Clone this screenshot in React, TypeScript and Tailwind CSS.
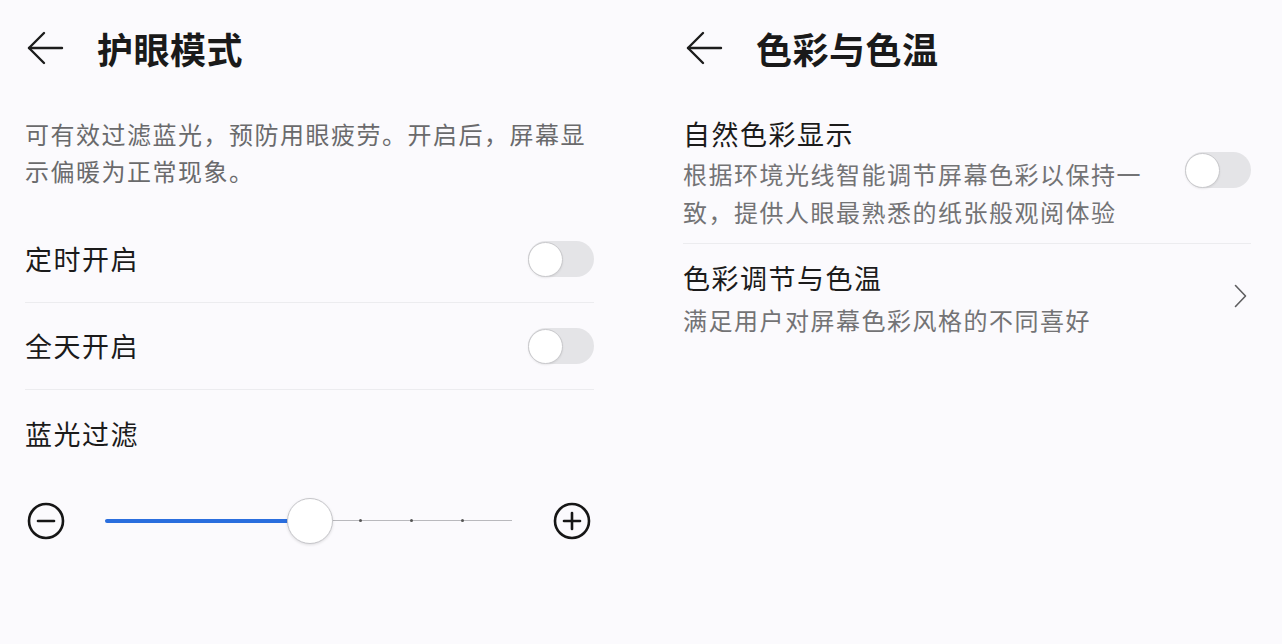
import React from "react";

const font = "font-['Noto_Sans_CJK_SC','Noto_Sans',sans-serif]";

function BackArrow({ className = "" }: { className?: string }) {
  return (
    <svg viewBox="0 0 37 34" className={`w-[37px] h-[34px] ${className}`} fill="none" stroke="#1c1c1c" strokeWidth="2.4" strokeLinecap="round" strokeLinejoin="round">
      <path d="M2 17 H35" />
      <path d="M17 2 L2 17 L17 32" />
    </svg>
  );
}

function Toggle() {
  return (
    <div className="w-[66px] h-[36px] rounded-full bg-[#e4e4e7] flex items-center">
      <div className="w-[35px] h-[35px] rounded-full bg-white border border-[#c9c9cc] shadow-[0_1px_2px_rgba(0,0,0,0.08)]" />
    </div>
  );
}

function Row({ label }: { label: string }) {
  return (
    <div className="h-[87px] flex items-center justify-between border-b border-[#ececef]">
      <span className="text-[27px] leading-[38px] tracking-[1.5px] text-[#1b1b1b]">{label}</span>
      <Toggle />
    </div>
  );
}

function RoundIcon({ plus }: { plus?: boolean }) {
  return (
    <svg viewBox="0 0 38 38" className="w-[38px] h-[38px]" fill="none" stroke="#161616" strokeWidth="2.6" strokeLinecap="round">
      <circle cx="19" cy="19" r="17" />
      <path d="M11 19 H27" />
      {plus && <path d="M19 11 V27" />}
    </svg>
  );
}

function BlueFilter() {
  return (
    <div className="flex items-center h-[46px]">
      <div className="ml-[2px]">
        <RoundIcon />
      </div>
      <div className="relative ml-[40px] w-[407px] h-[46px]">
        <div className="absolute left-0 right-0 top-[22px] h-px bg-[#b9b9bd]" />
        <div className="absolute left-0 w-[190px] top-[21px] h-[4px] bg-[#2a6ede] rounded-l-full" />
        <div className="absolute left-[254px] top-[21px] w-[3px] h-[3px] rounded-full bg-[#555]" />
        <div className="absolute left-[305px] top-[21px] w-[3px] h-[3px] rounded-full bg-[#555]" />
        <div className="absolute left-[356px] top-[21px] w-[3px] h-[3px] rounded-full bg-[#555]" />
        <div className="absolute left-[182px] top-0 w-[46px] h-[46px] rounded-full bg-white border border-[#c6c6ca] shadow-[0_1px_3px_rgba(0,0,0,0.12)]" />
      </div>
      <div className="ml-[41px]">
        <RoundIcon plus />
      </div>
    </div>
  );
}

function EyeCare() {
  return (
    <section className="w-[641px] pl-[25px] pr-[47px]">
      <header className="h-[96px] flex items-center">
        <BackArrow className="ml-[2px]" />
        <h1 className="ml-[33px] text-[36px] font-bold tracking-[0.5px] text-[#1a1a1a]">护眼模式</h1>
      </header>
      <p className="mt-[19px] text-[24px] leading-[37px] tracking-[1.5px] text-[#6a6a6c]">
        可有效过滤蓝光，预防用眼疲劳。开启后，屏幕显示偏暖为正常现象。
      </p>
      <div className="mt-[27px]">
        <Row label="定时开启" />
        <Row label="全天开启" />
      </div>
      <div className="h-[88px] flex items-center">
        <span className="text-[27px] leading-[38px] tracking-[1.5px] text-[#1b1b1b]">蓝光过滤</span>
      </div>
      <div className="mt-[20px]">
        <BlueFilter />
      </div>
    </section>
  );
}

function ColorTemp() {
  return (
    <section className="w-[641px] pl-[42px] pr-[31px]">
      <header className="h-[96px] flex items-center">
        <BackArrow className="ml-[3px]" />
        <h1 className="ml-[33px] text-[36px] font-bold tracking-[0.5px] text-[#1a1a1a]">色彩与色温</h1>
      </header>
      <div className="mt-[19px] pb-[12px] flex items-center justify-between border-b border-[#ececef]">
        <div>
          <div className="text-[27px] leading-[38px] tracking-[1.5px] text-[#1b1b1b]">自然色彩显示</div>
          <p className="mt-[2px] w-[470px] text-[24px] leading-[38px] tracking-[1.5px] text-[#737375]">
            根据环境光线智能调节屏幕色彩以保持一致，提供人眼最熟悉的纸张般观阅体验
          </p>
        </div>
        <div className="-mt-[6px]">
          <Toggle />
        </div>
      </div>
      <div className="pt-[15px] flex items-center justify-between">
        <div>
          <div className="text-[27px] leading-[38px] tracking-[1.5px] text-[#1b1b1b]">色彩调节与色温</div>
          <p className="mt-[4px] text-[24px] leading-[38px] tracking-[1.5px] text-[#737375]">满足用户对屏幕色彩风格的不同喜好</p>
        </div>
        <svg viewBox="0 0 13 24" className="w-[13px] h-[24px] mr-[4px] -mt-[6px]" fill="none" stroke="#5e5e60" strokeWidth="1.6" strokeLinecap="round" strokeLinejoin="round">
          <path d="M1.5 1.5 L11.5 12 L1.5 22.5" />
        </svg>
      </div>
    </section>
  );
}

export default function App() {
  return (
    <div className={`w-[1282px] h-[644px] bg-[#fbfafd] flex overflow-hidden ${font}`}>
      <EyeCare />
      <ColorTemp />
    </div>
  );
}
